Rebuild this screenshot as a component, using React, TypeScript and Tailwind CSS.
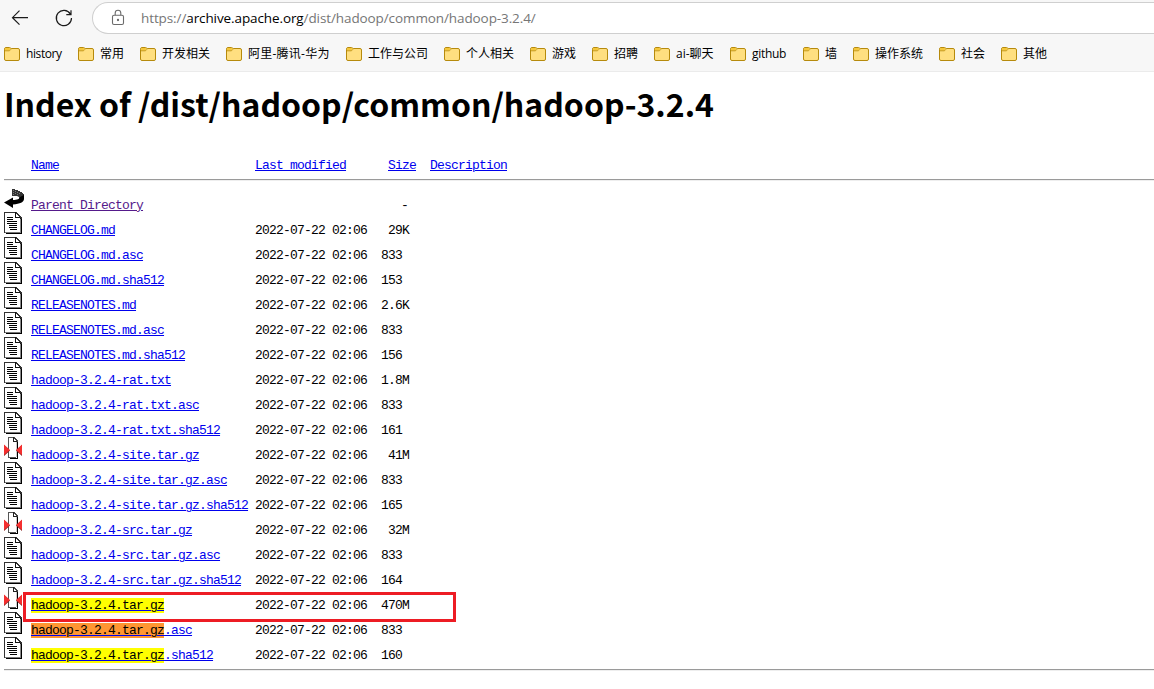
import React from 'react';

const bookmarks = [
  { name: 'history', w: 'w-[36px] tracking-[-0.4px]' },
  { name: '常用', w: 'w-[24px]' },
  { name: '开发相关', w: 'w-[48px]' },
  { name: '阿里-腾讯-华为', w: 'w-[82px] tracking-[0.25px]' },
  { name: '工作与公司', w: 'w-[60px]' },
  { name: '个人相关', w: 'w-[48px]' },
  { name: '游戏', w: 'w-[24px]' },
  { name: '招聘', w: 'w-[24px]' },
  { name: 'ai-聊天', w: 'w-[38px]' },
  { name: 'github', w: 'w-[35px] tracking-[-0.3px]' },
  { name: '墙', w: 'w-[12px]' },
  { name: '操作系统', w: 'w-[48px]' },
  { name: '社会', w: 'w-[24px]' },
  { name: '其他', w: 'w-[24px]' },
];

type Entry = { name: string; size: string; kind: 'text' | 'archive'; mark?: 'yellow' | 'orange' };

const MATCH = 'hadoop-3.2.4.tar.gz';

const entries: Entry[] = [
  { name: 'CHANGELOG.md', size: ' 29K', kind: 'text' },
  { name: 'CHANGELOG.md.asc', size: '833 ', kind: 'text' },
  { name: 'CHANGELOG.md.sha512', size: '153 ', kind: 'text' },
  { name: 'RELEASENOTES.md', size: '2.6K', kind: 'text' },
  { name: 'RELEASENOTES.md.asc', size: '833 ', kind: 'text' },
  { name: 'RELEASENOTES.md.sha512', size: '156 ', kind: 'text' },
  { name: 'hadoop-3.2.4-rat.txt', size: '1.8M', kind: 'text' },
  { name: 'hadoop-3.2.4-rat.txt.asc', size: '833 ', kind: 'text' },
  { name: 'hadoop-3.2.4-rat.txt.sha512', size: '161 ', kind: 'text' },
  { name: 'hadoop-3.2.4-site.tar.gz', size: ' 41M', kind: 'archive' },
  { name: 'hadoop-3.2.4-site.tar.gz.asc', size: '833 ', kind: 'text' },
  { name: 'hadoop-3.2.4-site.tar.gz.sha512', size: '165 ', kind: 'text' },
  { name: 'hadoop-3.2.4-src.tar.gz', size: ' 32M', kind: 'archive' },
  { name: 'hadoop-3.2.4-src.tar.gz.asc', size: '833 ', kind: 'text' },
  { name: 'hadoop-3.2.4-src.tar.gz.sha512', size: '164 ', kind: 'text' },
  { name: 'hadoop-3.2.4.tar.gz', size: '470M', kind: 'archive', mark: 'yellow' },
  { name: 'hadoop-3.2.4.tar.gz.asc', size: '833 ', kind: 'text', mark: 'orange' },
  { name: 'hadoop-3.2.4.tar.gz.sha512', size: '160 ', kind: 'text', mark: 'yellow' },
];

function Folder() {
  return (
    <svg width="16" height="14" viewBox="0 0 16 14" className="shrink-0">
      <path d="M.5 2.2Q.5.5 2 .5h3.6L7.2 1.5H14q1.5 0 1.5 1.5v9q0 1.5-1.5 1.5H2Q.5 13.5.5 12Z" fill="#ffdf80" stroke="#b68a0c" />
      <path d="M1 2.2Q1 1 2 1h3.5l1.2 1L5.6 3.5H1Z" fill="#f5c73a" />
      <path d="M.8 3.8h4.4q.5 0 .8-.5l1-1" fill="none" stroke="#b68a0c" strokeWidth=".8" />
    </svg>
  );
}

function DocIcon() {
  return (
    <svg width="18" height="22" viewBox="0 0 18 22" shapeRendering="crispEdges">
      <path d="M0 0h12l6 6v15H0Z" fill="#fff" />
      <path d="M0 0h12v1H1v20H0Z" fill="#333" />
      <path d="M16 7h1v14h-1z" fill="#888" />
      <path d="M17 6h1v16H2v-1h15Z" fill="#000" />
      <path d="M1 20h15v1H1Z" fill="#777" />
      <path d="M11 0h1v5h5v2h-1V6h-5z" fill="#111" />
      <path d="M12 0h1v1h1v1h1v1h1v1h1v1h1v2h-1V6h-1V5h-1V4h-1V3h-1V2h-1z" fill="#333" />
      <path d="M3 5h6v1H3zM3 7h6v1H3zM3 9h10v1H3zM3 11h10v1H3zM5 13h8v1H5zM5 15h8v1H5zM6 17h7v1H6z" fill="#000" />
    </svg>
  );
}

function ArchiveIcon() {
  return (
    <svg width="18" height="22" viewBox="0 0 18 22">
      <g shapeRendering="crispEdges">
        <path d="M4 0h6v1h1v1h1v1h1v18H4Z" fill="#fff" />
        <path d="M4 0h6v1H5v20H4zM5 20h7v1H5z" fill="#555" />
        <path d="M9 0h1v4h4v1H9z" fill="#222" />
        <path d="M10 0h1v1h1v1h1v1h1v2h-1V4h-1V3h-1V2h-1z" fill="#444" />
        <path d="M12 5h1v15h-1z" fill="#ccc" />
        <path d="M13 5h1v17H6v-1h7z" fill="#000" />
      </g>
      <path d="M0 8l6 5.5L0 19zM18 8l-6 5.5 6 5.5z" fill="#841a1a" />
      <path d="M0 7.5l6 5.5-6 5zM18 7.5L12 13l6 5z" fill="#f53030" />
    </svg>
  );
}

function BackIcon() {
  return (
    <svg width="20" height="20" viewBox="0 0 20 20">
      <path d="M8 1h3v1h3v1h2v1h2v1h1v1h1v5H15V9l-2-1H8Z" fill="#333" />
      <path d="M20 7v4c0 3-4 5-11 5.500V20L0 14.500 9 9.500V12c4 0 7-1 7-3z" fill="#000" />
      <path d="M9 2h1v1H9zM11 3h1v1h-1zM9 4h1v1H9zM13 4h1v1h-1zM11 5h1v1h-1zM9 6h1v1H9zM13 6h1v1h-1zM15 5h1v1h-1z" fill="#777" shapeRendering="crispEdges" />
    </svg>
  );
}

const link = 'underline decoration-1 underline-offset-[1px] text-[#0000ee]';

function FileName({ entry }: { entry: Entry }) {
  if (!entry.mark) return <span className={link}>{entry.name}</span>;
  return (
    <span className={link}>
      <span className={entry.mark === 'orange' ? 'bg-[#ff9632] text-black' : 'bg-[#ffff00] text-black'}>{MATCH}</span>
      {entry.name.slice(MATCH.length)}
    </span>
  );
}

export default function App() {
  return (
    <div className="h-[689px] w-[1154px] overflow-hidden bg-white text-black">
      <header className="flex h-[72px] flex-col border-b border-[#ebebeb] bg-[#f7f7f7]">
        <div className="flex h-9 shrink-0 pt-[2px]">
          <svg width="92" height="32" viewBox="0 0 92 32" className="shrink-0" fill="none" stroke="#1b1b1b" strokeWidth="1.2">
            <path d="M28 15.7H12.5M19.5 8.7l-7 7 7 7" />
            <path d="M70.4 12.1A7.6 7.6 0 1 0 71.5 16M71 8.2v4.5h-4.7" />
          </svg>
          <div className="flex h-8 flex-1 items-center rounded-l-full border border-r-0 border-[#cfcfcf] bg-white pl-[18px]">
            <svg width="14" height="18" viewBox="0 0 14 18" className="shrink-0" fill="none" stroke="#6b6b6b" strokeWidth="1.1">
              <rect x="1.5" y="6.3" width="11" height="9.2" rx="1.5" />
              <path d="M4.2 6.3V4a2.8 2.8 0 0 1 5.6 0v2.3" />
              <circle cx="7" cy="11" r=".6" fill="#6b6b6b" />
            </svg>
            <div className="ml-4 whitespace-nowrap pb-px font-['Open_Sans','Noto_Sans',sans-serif] text-[13.5px] leading-5 tracking-[-0.1px] text-[#767676]">
              https://<span className="text-black">archive.apache.org</span>/dist/hadoop/common/hadoop-3.2.4/
            </div>
          </div>
        </div>
        <nav className="flex h-9 shrink-0 items-center gap-4 pl-1">
          {bookmarks.map((b) => (
            <div key={b.name} className="flex shrink-0 items-center gap-[6px]">
              <Folder />
              <span className={`${b.w} whitespace-nowrap font-['Open_Sans','Noto_Sans_CJK_SC',sans-serif] text-[12px] leading-4`}>{b.name}</span>
            </div>
          ))}
        </nav>
      </header>

      <main className="pl-1">
        <h1 className="h-[72px] whitespace-nowrap pt-[6px] font-['Noto_Sans_CJK_SC',sans-serif] text-[32px] font-bold leading-[50px]">
          Index of /dist/hadoop/common/hadoop-3.2.4
        </h1>

        <div className="whitespace-pre font-['Liberation_Mono',monospace] text-[13px] leading-4 tracking-[-0.8px]">
          <div className="flex h-[35px] pt-[14px]">
            <span className="ml-[27px] w-[224px]"><span className={link}>Name</span></span>
            <span className="w-[133px]"><span className={link}>Last modified</span></span>
            <span className="w-[42px]"><span className={link}>Size</span></span>
            <span className={link}>Description</span>
          </div>
          <div className="h-[2px] border-b border-t border-b-[#eeeeee] border-t-[#9a9a9a]" />

          <div className="flex h-[31px] pt-[7px]">
            <div className="w-[27px] shrink-0"><BackIcon /></div>
            <span className="w-[370px] pt-[10px]"><span className="text-[#551a8b] underline decoration-1 underline-offset-[1px]">Parent Directory</span></span>
            <span className="pt-[10px]">-</span>
          </div>
          {entries.map((e) => (
            <div key={e.name} className="relative flex h-[25px]">
              <div className="w-[27px] shrink-0">{e.kind === 'text' ? <DocIcon /> : <ArchiveIcon />}</div>
              <span className="w-[224px] shrink-0 pt-[11px]"><FileName entry={e} /></span>
              <span className="w-[126px] shrink-0 pt-[11px]">2022-07-22 02:06</span>
              <span className="pt-[11px]">{e.size}</span>
              {e.name === MATCH && (
                <div className="absolute left-[19px] top-[5px] h-[30px] w-[433px] border-[3px] border-[#ed1c24]" />
              )}
            </div>
          ))}
          <div className="mt-[7px] h-[2px] border-b border-t border-b-[#eeeeee] border-t-[#9a9a9a]" />
        </div>
      </main>
    </div>
  );
}
